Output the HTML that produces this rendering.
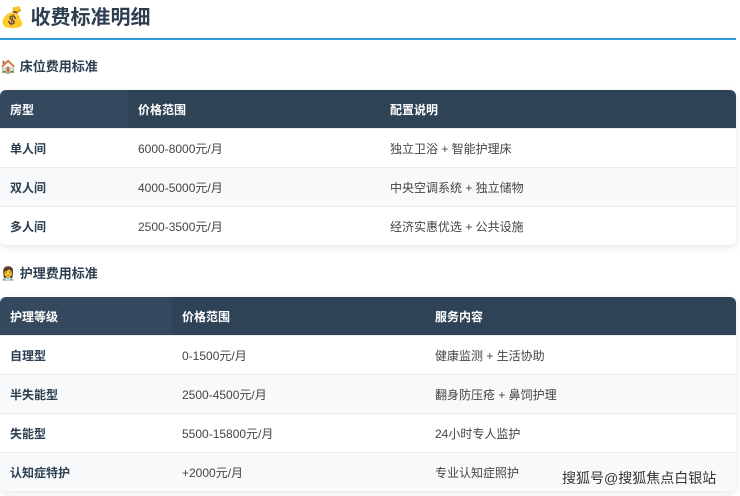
<!DOCTYPE html><html><head><meta charset="utf-8"><style>
body{margin:0;width:740px;height:496px;overflow:hidden;background:#fff;font-family:"Liberation Sans","Noto Sans CJK SC",sans-serif;color:#2c3e50}
h1{position:absolute;left:0;top:3px;margin:0;font-size:20px;font-weight:bold;height:30px;line-height:30px}
.line{position:absolute;left:0;top:38px;width:736px;height:2px;background:#3498db}
.lab{position:absolute;left:0;font-size:13px;font-weight:bold;color:#2c3e50}
table{position:absolute;left:0;width:736px;border-collapse:collapse;border-radius:6px;overflow:hidden;box-shadow:0 2px 8px rgba(0,0,0,.1);font-size:12px}
th{background:#2f4357;color:#fff;text-align:left;font-weight:bold;padding:0 10px;height:38px}
th:first-child{background:#34495e}
td{padding:0 10px;height:38px;border-top:1px solid #e8ecef;color:#444}
td:first-child{font-weight:bold;color:#2c3e50}
tr:nth-child(odd) td{background:#f8f9fa}
.wm{position:absolute;left:562px;top:468px;font-size:14px;color:#333;text-shadow:0 0 2px #fff}
</style></head><body>
<h1>💰 收费标准明细</h1><div class="line"></div>
<div class="lab" style="top:56px">🏠 床位费用标准</div>
<table style="top:90px"><tr><th style="width:108px">房型</th><th style="width:232px">价格范围</th><th>配置说明</th></tr>
<tr><td>单人间</td><td>6000-8000元/月</td><td>独立卫浴 + 智能护理床</td></tr>
<tr><td>双人间</td><td>4000-5000元/月</td><td>中央空调系统 + 独立储物</td></tr>
<tr><td>多人间</td><td>2500-3500元/月</td><td>经济实惠优选 + 公共设施</td></tr></table>
<div class="lab" style="top:263px">👩‍⚕️ 护理费用标准</div>
<table style="top:297px"><tr><th style="width:152px">护理等级</th><th style="width:233px">价格范围</th><th>服务内容</th></tr>
<tr><td>自理型</td><td>0-1500元/月</td><td>健康监测 + 生活协助</td></tr>
<tr><td>半失能型</td><td>2500-4500元/月</td><td>翻身防压疮 + 鼻饲护理</td></tr>
<tr><td>失能型</td><td>5500-15800元/月</td><td>24小时专人监护</td></tr>
<tr><td>认知症特护</td><td>+2000元/月</td><td>专业认知症照护</td></tr></table>
<div class="wm">搜狐号@搜狐焦点白银站</div>
</body></html>
